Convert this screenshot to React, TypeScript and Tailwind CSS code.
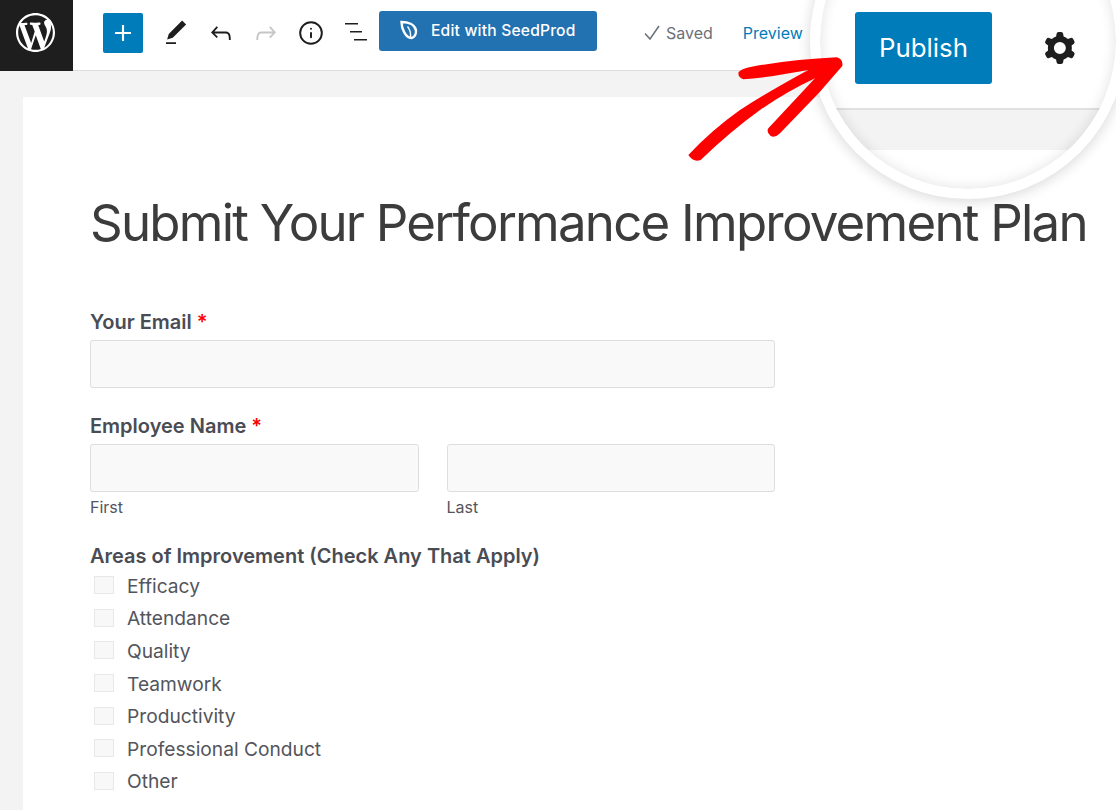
import { Info } from "lucide-react";

const font = { fontFamily: "Inter, sans-serif" };

const checks = ["Efficacy", "Attendance", "Quality", "Teamwork", "Productivity", "Professional Conduct", "Other"];

function WpLogo() {
  return (
    <svg viewBox="0 0 20 20" className="h-[39px] w-[39px]" fill="#fff">
      <path d="M20 10c0-5.51-4.49-10-10-10C4.48 0 0 4.49 0 10c0 5.52 4.48 10 10 10 5.51 0 10-4.48 10-10zM7.78 15.37L4.370 6.220c.55-.02 1.170-.08 1.170-.08.5-.06.44-1.130-.06-1.110 0 0-1.450.11-2.370.11-.18 0-.37 0-.58-.01C4.120 2.690 6.870 1.110 10 1.110c2.330 0 4.450.87 6.050 2.340-.68-.11-1.650.39-1.650 1.580 0 .74.45 1.360.9 2.100.35.61.55 1.360.55 2.460 0 1.490-1.400 5-1.400 5l-3.030-8.370c.54-.02.82-.17.82-.17.5-.05.44-1.250-.06-1.220 0 0-1.440.12-2.380.12-.87 0-2.330-.12-2.330-.12-.5-.03-.56 1.200-.06 1.220l.92.08 1.260 3.410zM17.410 10c.24-.64.74-1.870.43-4.250.7 1.290 1.050 2.710 1.050 4.250 0 3.290-1.730 6.240-4.400 7.780.97-2.590 1.940-5.200 2.920-7.780zM6.100 18.090C3.120 16.650 1.110 13.530 1.110 10c0-1.300.23-2.480.72-3.590C3.250 10.300 4.670 14.200 6.100 18.090zm4.030-6.630l2.580 6.980c-.86.29-1.760.45-2.710.45-.79 0-1.570-.11-2.290-.33.81-2.380 1.620-4.740 2.420-7.100z" />
    </svg>
  );
}

function Field() {
  return <div className="h-12 rounded-[3px] border border-[#dedede] bg-[#f9f9f9]" />;
}

function Label({ text, required }: { text: string; required?: boolean }) {
  return (
    <div className="text-[20px] font-semibold leading-6 text-[#4a4c54]">
      {text}
      {required && <span className="text-[#f00]"> *</span>}
    </div>
  );
}

export default function App() {
  return (
    <div style={font} className="relative h-[810px] w-[1116px] overflow-hidden bg-[#f3f3f3]">
      {/* Top bar */}
      <div className="flex h-[71px] items-center border-b border-[#dddddd] bg-white pb-[5px]">
        <div className="-mb-[5px] flex h-[71px] w-[73px] items-center justify-center bg-[#1e1e1e] pb-[5px] pr-[3px]">
          <WpLogo />
        </div>
        <div className="ml-[30px] flex h-10 w-10 items-center justify-center rounded-[2px] bg-[#007cba]">
          <svg viewBox="0 0 24 24" className="h-8 w-8" fill="#fff">
            <path d="M18 11.200h-5.200V6h-1.600v5.200H6v1.600h5.200V18h1.600v-5.200H18z" />
          </svg>
        </div>
        <svg viewBox="0 0 24 24" className="ml-[18px] h-[30px] w-[30px]" fill="#1e1e1e">
          <path d="M20.100 5.100L16.900 2 6.200 12.700l-1.300 4.400 4.500-1.300L20.100 5.100zM4 20.800h8v-1.500H4v1.500z" />
        </svg>
        <svg viewBox="0 0 24 24" className="ml-[15px] h-[30px] w-[30px]" fill="#1e1e1e">
          <path d="M18.300 11.700c-.6-.6-1.400-.9-2.300-.9H6.700l2.900-3.300-1.100-1-4.500 5L8.500 16l1-1-2.700-2.700H16c.5 0 .9.2 1.300.5 1 1 1 3.400 1 4.500v.3h1.500v-.2c0-1.500 0-4.300-1.500-5.700z" />
        </svg>
        <svg viewBox="0 0 24 24" className="ml-[15px] h-[30px] w-[30px]" fill="#c6c6c6">
          <path d="M15.600 6.500l-1.100 1 2.900 3.300H8c-.9 0-1.700.3-2.300.9-1.400 1.500-1.400 4.200-1.400 5.700v.2h1.500v-.3c0-1.100 0-3.500 1-4.500.3-.3.7-.5 1.300-.5h9.200L14.500 15l1 1.100 4.500-4.600-4.400-5z" />
        </svg>
        <Info size={26} color="#1e1e1e" strokeWidth={1.8} className="ml-[17px]" />
        <svg viewBox="0 0 24 24" className="ml-[20px] h-6 w-6" fill="#1e1e1e">
          <path d="M1 2h13v1.500H1zM6 10h12v1.500H6zM10 18h13v1.500H10z" />
        </svg>
        <div className="-mt-1 ml-[11px] flex h-10 w-[218px] items-center rounded-[3px] bg-[#2271b1] pl-5 pt-[1px] text-[15.6px] font-medium tracking-[0.2px] text-white">
          <svg viewBox="0 0 20 20" className="mr-3 h-5 w-5 -translate-y-[1px]" fill="none" stroke="#fff" strokeWidth="2.400">
            <path d="M2.500 2C8.500 2 16 4 17 10.500c.4 3.500-1.500 7-4.500 7.500C6.500 18 2.500 8.500 2.500 2Z" />
            <path d="M8.500 6.500c2.500 3 3.500 6.500 3 11" strokeWidth="1.400" />
          </svg>
          Edit with SeedProd
        </div>
        <svg viewBox="0 0 20 20" className="ml-[45px] h-5 w-5" fill="none" stroke="#6c7079" strokeWidth="1.500">
          <path d="M3 10.500 8 16 17 3" />
        </svg>
        <span className="ml-[4px] text-[16px] text-[#6c7079]">Saved</span>
        <span className="ml-[30px] text-[16px] text-[#007cba]">Preview</span>
      </div>

      {/* Sheet */}
      <div className="ml-[23px] mt-[26px] h-[713px] bg-white pl-[67px] pt-[92px]">
        <h1 className="whitespace-nowrap text-[51px] font-normal leading-[68px] tracking-[-1.780px] text-[#3c3c3c]">
          Submit Your Performance Improvement Plan
        </h1>
        <div className="mt-[53px] w-[685px]">
          <Label text="Your Email" required />
          <div className="mt-[6px]">
            <Field />
          </div>
          <div className="mt-[26px]">
            <Label text="Employee Name" required />
          </div>
          <div className="mt-[6px] grid grid-cols-2 gap-7">
            <div>
              <Field />
              <div className="mt-[5px] text-[16px] leading-5 text-[#53555c]">First</div>
            </div>
            <div>
              <Field />
              <div className="mt-[5px] text-[16px] leading-5 text-[#53555c]">Last</div>
            </div>
          </div>
          <div className="mt-[27px]">
            <Label text="Areas of Improvement (Check Any That Apply)" />
          </div>
          <div className="mt-[2px] flex flex-col">
            {checks.map((c) => (
              <div key={c} className="flex h-[32.6px] items-center">
                <div className="ml-1 h-[18px] w-5 -translate-y-[1px] border border-[#e8e8e8] bg-[#f8f8f8]" />
                <span className="ml-[13px] text-[19.2px] text-[#53555c]">{c}</span>
              </div>
            ))}
          </div>
        </div>
      </div>

      {/* Magnifier overlay */}
      <div className="absolute left-[810px] top-[-117px] h-[316px] w-[316px] overflow-hidden rounded-full border-[10px] border-white bg-white shadow-[0_2px_14px_rgba(0,0,0,0.16)]">
        <div className="absolute left-[-820px] top-[107px] w-[1200px]">
          <div className="h-[110px] border-b-2 border-[#e0e0e0] bg-white" />
          <div className="h-[40px] bg-[#f3f3f3]" />
        </div>
        <div className="absolute inset-0 rounded-full shadow-[inset_0_0_14px_rgba(0,0,0,0.12)]" />
      </div>
      <div className="absolute left-[855px] top-3 flex h-[72px] w-[137px] items-center justify-center rounded-[3px] bg-[#007cba] pt-[1px] text-[25.8px] text-white">
        Publish
      </div>
      <svg viewBox="0 0 24 24" className="absolute left-[1036px] top-6 h-12 w-12" fill="#1e1e1e">
        <path
          fillRule="evenodd"
          clipRule="evenodd"
          d="M10.289 4.836A1 1 0 0111.275 4h1.306a1 1 0 01.987.836l.244 1.466c.787.26 1.503.679 2.108 1.218l1.393-.522a1 1 0 011.216.437l.653 1.130a1 1 0 01-.23 1.273l-1.148.944a6.025 6.025 0 010 2.435l1.149.946a1 1 0 01.23 1.272l-.653 1.130a1 1 0 01-1.216.437l-1.394-.522c-.605.54-1.320.958-2.108 1.218l-.244 1.466a1 1 0 01-.987.836h-1.306a1 1 0 01-.986-.836l-.244-1.466a5.995 5.995 0 01-2.108-1.218l-1.394.522a1 1 0 01-1.217-.436l-.653-1.131a1 1 0 01.23-1.272l1.149-.946a6.026 6.026 0 010-2.435l-1.148-.944a1 1 0 01-.23-1.272l.653-1.131a1 1 0 011.217-.437l1.393.522a5.994 5.994 0 012.108-1.218l.244-1.466zM14.929 12a3 3 0 11-6 0 3 3 0 016 0z"
        />
      </svg>

      {/* Arrow */}
      <svg className="absolute left-[680px] top-[50px]" width="180" height="120" viewBox="0 0 540 360" fill="#ff0000">
        <path d="M25 315Q95 240 180 180Q270 122 385 60L280 78Q230 85 190 88Q172 80 176 66Q185 55 215 50Q340 28 470 22Q490 28 487 48Q450 90 420 125L300 250Q285 265 272 258Q258 245 265 235L405 85Q320 125 240 180Q150 245 62 330Q40 338 25 315Z" />
      </svg>
    </div>
  );
}
